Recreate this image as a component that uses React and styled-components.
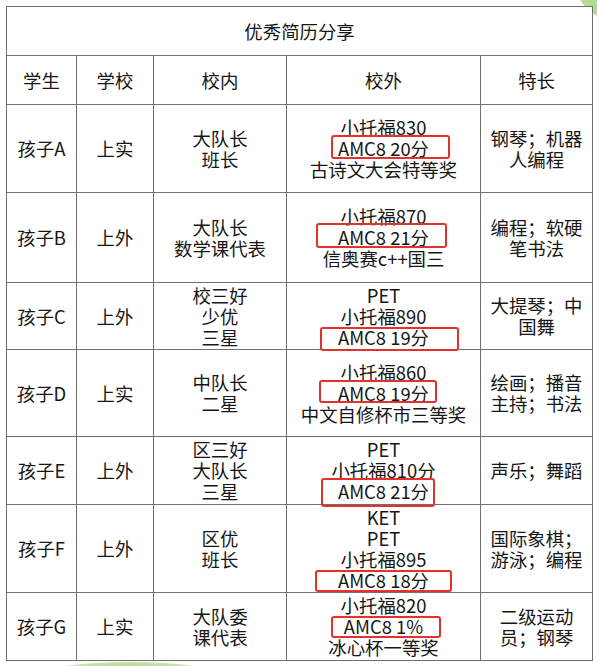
import React from "react";
import styled, { createGlobalStyle } from "styled-components";

const Global = createGlobalStyle`
  html, body { margin: 0; padding: 0; background: #ffffff; }
  body { font-family: "Noto Sans CJK SC", "Noto Sans", sans-serif; color: #161616; }
`;

const Page = styled.div`
  position: relative;
  width: 597px;
  height: 666px;
  overflow: hidden;
  padding: 6px 0 0 6px;
  box-sizing: border-box;
  background: #ffffff;
`;

const LeafTop = styled.div`
  position: absolute;
  left: 573px;
  top: -72px;
  width: 94px;
  height: 94px;
  border-radius: 50%;
  background: #b4dc93;
`;

const LeafBottom = styled.div`
  position: absolute;
  left: 50px;
  top: 662px;
  width: 160px;
  height: 20px;
  border-radius: 50%;
  background: radial-gradient(ellipse at 50% 40%, #a9d585 0%, #c6e6ae 55%, #e3f2d6 100%);
`;

const Table = styled.table`
  position: relative;
  z-index: 1;
  border-collapse: collapse;
  table-layout: fixed;
  width: 586px;
  background: #ffffff;
  font-size: 18.4px;
  line-height: 21px;
  text-align: center;
`;

const Col = styled.col`
  width: ${(p) => p.$w}px;
`;

const Row = styled.tr`
  height: ${(p) => p.$h}px;
`;

const Cell = styled.td`
  position: relative;
  border: 1px solid #6f6f6f;
  padding: 0 4px;
  vertical-align: middle;
  white-space: nowrap;
`;

const TitleCell = styled(Cell)`
  font-size: 18.4px;
`;

const Line = styled.div`
  display: block;
`;

const Mark = styled.div`
  position: absolute;
  left: ${(p) => p.$x}px;
  top: ${(p) => p.$y}px;
  width: ${(p) => p.$w}px;
  height: ${(p) => p.$h}px;
  border: 2px solid #e5312b;
  border-radius: 3px;
  box-sizing: border-box;
  pointer-events: none;
`;

const rows = [
  {
    name: "孩子A", school: "上实", inner: ["大队长", "班长"],
    outer: ["小托福830", "AMC8 20分", "古诗文大会特等奖"],
    talent: ["钢琴；机器", "人编程"], h: 88,
    box: { x: 44, y: 30, w: 119, h: 24 },
  },
  {
    name: "孩子B", school: "上外", inner: ["大队长", "数学课代表"],
    outer: ["小托福870", "AMC8 21分", "信奥赛c++国三"],
    talent: ["编程；软硬", "笔书法"], h: 90,
    box: { x: 29, y: 30, w: 131, h: 25 },
  },
  {
    name: "孩子C", school: "上外", inner: ["校三好", "少优", "三星"],
    outer: ["PET", "小托福890", "AMC8 19分"],
    talent: ["大提琴；中", "国舞"], h: 67,
    box: { x: 33, y: 44, w: 139, h: 24 },
  },
  {
    name: "孩子D", school: "上实", inner: ["中队长", "二星"],
    outer: ["小托福860", "AMC8 19分", "中文自修杯市三等奖"],
    talent: ["绘画；播音", "主持；书法"], h: 87,
    box: { x: 32, y: 30, w: 118, h: 23 },
  },
  {
    name: "孩子E", school: "上外", inner: ["区三好", "大队长", "三星"],
    outer: ["PET", "小托福810分", "AMC8 21分"],
    talent: ["声乐；舞蹈"], h: 68,
    box: { x: 34, y: 41, w: 114, h: 29 },
  },
  {
    name: "孩子F", school: "上外", inner: ["区优", "班长"],
    outer: ["KET", "PET", "小托福895", "AMC8 18分"],
    talent: ["国际象棋；", "游泳；编程"], h: 88,
    box: { x: 28, y: 65, w: 137, h: 22 },
  },
  {
    name: "孩子G", school: "上实", inner: ["大队委", "课代表"],
    outer: ["小托福820", "AMC8 1%", "冰心杯一等奖"],
    talent: ["二级运动", "员；钢琴"], h: 68,
    box: { x: 44, y: 23, w: 110, h: 22 },
  },
];

const Lines = ({ items }) => (
  <>
    {items.map((t, i) => (
      <Line key={i}>{t}</Line>
    ))}
  </>
);

export default function App() {
  return (
    <>
      <Global />
      <Page>
        <LeafTop />
        <LeafBottom />
        <Table>
          <colgroup>
            <Col $w={70} />
            <Col $w={77} />
            <Col $w={133} />
            <Col $w={194} />
            <Col $w={112} />
          </colgroup>
          <tbody>
            <Row $h={49}>
              <TitleCell colSpan={5}>优秀简历分享</TitleCell>
            </Row>
            <Row $h={49}>
              <Cell>学生</Cell>
              <Cell>学校</Cell>
              <Cell>校内</Cell>
              <Cell>校外</Cell>
              <Cell>特长</Cell>
            </Row>
            {rows.map((r) => (
              <Row key={r.name} $h={r.h}>
                <Cell>{r.name}</Cell>
                <Cell>{r.school}</Cell>
                <Cell>
                  <Lines items={r.inner} />
                </Cell>
                <Cell>
                  <Lines items={r.outer} />
                  <Mark $x={r.box.x} $y={r.box.y} $w={r.box.w} $h={r.box.h} />
                </Cell>
                <Cell>
                  <Lines items={r.talent} />
                </Cell>
              </Row>
            ))}
          </tbody>
        </Table>
      </Page>
    </>
  );
}
